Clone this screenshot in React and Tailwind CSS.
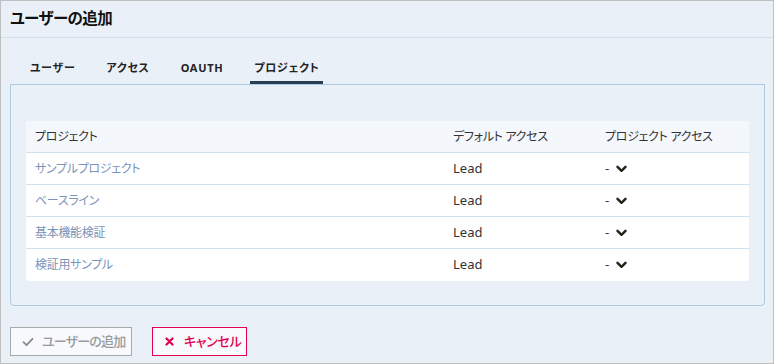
const rows = [
  { name: "サンプルプロジェクト", access: "Lead" },
  { name: "ベースライン", access: "Lead" },
  { name: "基本機能検証", access: "Lead" },
  { name: "検証用サンプル", access: "Lead" },
];

const tabs = ["ユーザー", "アクセス", "OAUTH", "プロジェクト"];

function Chevron() {
  return (
    <svg width="11" height="8" viewBox="0 0 11 8" className="ml-[7px]">
      <polyline
        points="1.5,1.8 5.5,5.8 9.5,1.8"
        fill="none"
        stroke="#222"
        strokeWidth="2.4"
        strokeLinecap="round"
        strokeLinejoin="round"
      />
    </svg>
  );
}

export default function App() {
  return (
    <div
      className={'w-[774px] h-[364px] bg-[#e9f0f8] border border-[#bfbfbf] flex flex-col overflow-hidden font-["Noto_Sans","Noto_Sans_CJK_JP",sans-serif] [font-feature-settings:"palt"]'}
    >
      {/* header */}
      <div className="h-[37px] border-b border-[#d2e0ec] flex items-center pl-[9px]">
        <h1 className="text-[15.5px] tracking-[-0.6px] font-bold text-[#111] leading-none whitespace-nowrap">
          ユーザーの追加
        </h1>
      </div>

      {/* tabs */}
      <div className="flex pl-[25px] gap-[23px] mt-[20px] h-[26px]">
        {tabs.map((t) => {
          const active = t === "プロジェクト";
          return (
            <div key={t} className="flex flex-col items-stretch justify-between">
              <span className="px-[4px] text-[11px] font-bold tracking-[0.7px] text-[#222] leading-none mt-[4px] whitespace-nowrap">
                {t}
              </span>
              <div className={`h-[3px] ${active ? "bg-[#263f55]" : ""}`} />
            </div>
          );
        })}
      </div>

      {/* panel */}
      <div className="mx-[9px] w-[755px] border border-[#abcbe2] rounded-b-[4px] pt-[36px] pb-[24px] px-[15px]">
        <div className="bg-white rounded-[3px] text-[12px] tracking-[-0.3px] whitespace-nowrap">
          <div className="flex h-[32px] items-center bg-[#f4f7fb] border-b border-[#d3e1ee] rounded-t-[3px] text-[#333]">
            <div className="w-[418px] pl-[9px]">プロジェクト</div>
            <div className="w-[152px] pl-[9px]">デフォルト アクセス</div>
            <div className="flex-1 pl-[9px]">プロジェクト アクセス</div>
          </div>
          {rows.map((r, i) => (
            <div
              key={r.name}
              className={`flex h-[32px] items-center ${i < rows.length - 1 ? "border-b border-[#d3e1ee]" : ""}`}
            >
              <div className="w-[418px] pl-[9px] text-[#7b93b8]">{r.name}</div>
              <div className="w-[152px] pl-[9px] text-[13px] tracking-normal text-[#333]">{r.access}</div>
              <div className="flex-1 pl-[9px] flex items-center text-[13px] text-[#333]">
                <span>-</span>
                <Chevron />
              </div>
            </div>
          ))}
        </div>
      </div>

      {/* buttons */}
      <div className="flex gap-[20px] pl-[9px] mt-[21px]">
        <button className="h-[29px] w-[122px] border border-[#a8a8a8] bg-[#f7f9fc] flex items-center pl-[11px] text-[13px] tracking-[-0.8px] text-[#9a9a9a] font-medium whitespace-nowrap">
          <svg width="12" height="10" viewBox="0 0 12 10" className="mr-[8px] shrink-0">
            <polyline
              points="1.5,5.2 4.5,8.2 10.5,1.8"
              fill="none"
              stroke="#8a8a8a"
              strokeWidth="1.8"
              strokeLinecap="round"
              strokeLinejoin="round"
            />
          </svg>
          ユーザーの追加
        </button>
        <button className="h-[29px] w-[95px] border border-[#e0004d] bg-[#f7f9fc] flex items-center pl-[12px] text-[13px] tracking-[-0.3px] text-[#e0004d] font-medium whitespace-nowrap">
          <svg width="9" height="9" viewBox="0 0 9 9" className="mr-[10px] shrink-0">
            <path d="M1.5 1.5 L7.5 7.5 M7.5 1.5 L1.5 7.5" stroke="#e0004d" strokeWidth="2.2" strokeLinecap="round" />
          </svg>
          キャンセル
        </button>
      </div>
    </div>
  );
}
